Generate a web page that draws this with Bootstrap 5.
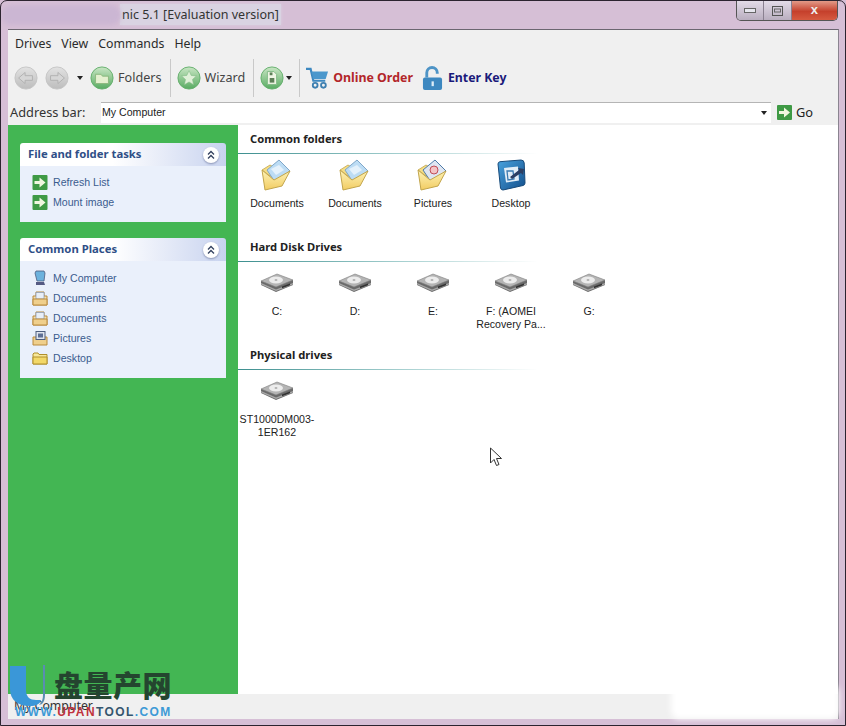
<!DOCTYPE html>
<html lang="en">
<head>
<meta charset="UTF-8">
<title>Partition Recovery</title>
<link href="https://cdn.jsdelivr.net/npm/bootstrap@5.3.0/dist/css/bootstrap.min.css" rel="stylesheet">
<style>
html, body { height: 100%; }
body { background: #d6bfd6; font-family: "Liberation Sans", sans-serif; font-size: 10.6px; color: #222; overflow: hidden; }
.app-win { width: 846px; height: 726px; position: relative; padding: 0 6px 7px 7px; border: 1px solid #2c2430; border-radius: 7px 7px 0 0; overflow: hidden; background: #d6bfd6; }
.title-row { height: 28px; padding-left: 112px; }
.title-text { font-family: "Noto Sans", sans-serif; font-size: 12.5px; color: #333; background: #d9d3e2; padding: 0 2px; margin-top: 3px; line-height: 21px; box-shadow: 0 0 3px #d9d3e2; }
.title-smudge { position: absolute; left: 0; top: 4px; width: 120px; height: 20px; background: #cbb6d3; border-radius: 10px; filter: blur(2px); }
.win-btns { width: 102px; height: 20px; border: 1px solid #555; border-top: 0; border-radius: 0 0 5px 5px; overflow: hidden; margin-right: 1px; flex: none; }
.win-btn { background: linear-gradient(#e3dbe8, #b9aebf); border-right: 1px solid #8a8090; width: 28px; }
.win-btn.wb-close { width: 46px; flex: auto; border: 0; background: linear-gradient(#e29a88, #c5402c 55%, #d65a40); color: #eee; font-size: 13px; font-weight: 700; line-height: 17px; text-align: center; }
.client { height: 690px; background: #f0f0f0; border-top: 1px solid #6b6670; border-right: 1px solid #8a8490; }
.menu-row { height: 28px; padding-left: 7px; gap: 10px; font-family: "Noto Sans", sans-serif; font-size: 12.3px; color: #2b2b2b; }
.tool-row { height: 44px; padding: 0 0 4px 6px; font-family: "Noto Sans", sans-serif; font-size: 12.6px; color: #444; }
.tool-sep { width: 1px; height: 38px; background: #c9c9c9; }
.caret-mini { width: 0; height: 0; border: 3px solid transparent; border-top: 4px solid #222; border-bottom: 0; }
.tool-order { color: #b3262a; font-weight: 700; font-size: 12.4px; }
.tool-key { color: #1a1a7a; font-weight: 700; font-size: 12.3px; }
.gl-2 { margin-left: 2px; } .gl-6 { margin-left: 6px; } .gl-7 { margin-left: 7px; } .gl-8 { margin-left: 8px; } .gl-9 { margin-left: 9px; }
.gr-4 { margin-right: 4px; } .gr-5 { margin-right: 5px; } .gr-6 { margin-right: 6px; } .gr-7 { margin-right: 7px; }
.addr-row { height: 23px; padding-bottom: 2px; font-family: "Noto Sans", sans-serif; font-size: 12.8px; }
.addr-label { width: 93px; padding-left: 2px; color: #333; flex: none; }
.addr-box { width: 670px; height: 21px; background: #fff; border-top: 1px solid #b5b5b5; font-family: "Liberation Sans", sans-serif; font-size: 10.6px; padding-left: 1px; flex: none; }
.main-row { height: 569px; }
.side-pane { width: 230px; background: #43b653; padding: 18px 12px 0 12px; flex: none; }
.task-box { margin-bottom: 16px; }
.task-head { height: 23px; background: linear-gradient(90deg, #fff 45%, #c8d3ef); border-radius: 3px 3px 0 0; padding: 0 7px 0 8px; color: #2f4f87; font-family: "Noto Sans", sans-serif; font-weight: 700; font-size: 11.3px; }
.chev-btn { width: 16px; height: 16px; background: #fff; border-radius: 50%; box-shadow: 0 1px 2px #8a94b5; }
.task-body { background: #eaf0fb; padding: 6px 0 10px 12px; color: #3b5c8f; line-height: 20px; }
.task-body.tb-places { padding-top: 7px; }
.task-line { height: 20px; gap: 5px; }
.file-pane { background: #fff; }
.file-sect { height: 108px; padding-top: 4px; }
.sect-title { font-family: "Noto Sans", sans-serif; font-weight: 700; font-size: 11.2px; color: #222; padding-left: 12px; height: 20px; line-height: 20px; }
.sect-rule { width: 300px; height: 1px; background: linear-gradient(90deg, #3d8f8f, #a6d0d0 55%, #fff); margin-top: 4px; }
.file-grid { display: flex; padding-top: 2px; }
.file-item { width: 78px; text-align: center; line-height: 13px; color: #222; }
.file-ico { height: 38px; display: flex; align-items: center; justify-content: center; margin-bottom: 3px; }
.status-row { height: 24px; padding: 1px 0 0 6px; font-family: "Noto Sans", sans-serif; font-size: 12.3px; color: #333; }
.wm-blob { position: absolute; right: 6px; bottom: 6px; width: 168px; height: 34px; background: #fff; border-radius: 8px; filter: blur(3px); }
.wm-logo { position: absolute; left: 8px; top: 664px; width: 170px; height: 58px; pointer-events: none; }
.wm-cn { position: absolute; left: 45px; top: 2px; font-family: "Noto Sans CJK SC", sans-serif; font-weight: 900; font-size: 29px; line-height: 34px; letter-spacing: .5px; color: #24452f; white-space: nowrap; }
.wm-url { position: absolute; left: 6px; top: 38px; font-weight: 700; font-size: 12px; letter-spacing: 1.4px; white-space: nowrap; color: #3d9ad6; }
.wm-red { color: #c0333d; }
.wm-dark { color: #35566e; }
.mouse-ptr { position: absolute; left: 488px; top: 446px; }
</style>
</head>
<body>
<svg width="0" height="0" class="position-absolute">
  <defs>
    <linearGradient id="gGreen" x1="0" y1="0" x2="0" y2="1"><stop offset="0" stop-color="#c9e6c4"/><stop offset="1" stop-color="#58ab62"/></linearGradient>
    <linearGradient id="gGrey" x1="0" y1="0" x2="0" y2="1"><stop offset="0" stop-color="#e2e2e2"/><stop offset="1" stop-color="#bdbdbd"/></linearGradient>
    <linearGradient id="gFold" x1="0" y1="0" x2="0" y2="1"><stop offset="0" stop-color="#fdf3b8"/><stop offset="1" stop-color="#f2cc62"/></linearGradient>
    <linearGradient id="gDesk" x1="0" y1="0" x2="1" y2="1"><stop offset="0" stop-color="#4aa3de"/><stop offset="1" stop-color="#124f8c"/></linearGradient>
    <symbol id="i-back" viewBox="0 0 26 26"><circle cx="13" cy="13" r="12" fill="url(#gGrey)" stroke="#c4c4c4"/><path d="M5 13l7-6v3.500h8v5h-8V19z" fill="#d6d6d6" stroke="#b0b0b0"/></symbol>
    <symbol id="i-fwd" viewBox="0 0 26 26"><circle cx="13" cy="13" r="12" fill="url(#gGrey)" stroke="#c4c4c4"/><path d="M21 13l-7-6v3.500H6v5h8V19z" fill="#d6d6d6" stroke="#b0b0b0"/></symbol>
    <symbol id="i-folders" viewBox="0 0 26 26"><circle cx="13" cy="13" r="12" fill="url(#gGreen)" stroke="#62ae6a"/><path d="M6 9h6l1.500 2H20v8H6z" fill="#e4f0cf" stroke="#8ab77c"/></symbol>
    <symbol id="i-wizard" viewBox="0 0 26 26"><circle cx="13" cy="13" r="12" fill="url(#gGreen)" stroke="#62ae6a"/><path d="M13 5l2.400 5.200 5.600.6-4.200 3.800 1.200 5.600-5-2.900-5 2.900 1.200-5.600L5 10.800l5.600-.6z" fill="#dff0d8" stroke="#7fb983" stroke-width=".6"/></symbol>
    <symbol id="i-disk" viewBox="0 0 26 26"><circle cx="13" cy="13" r="12" fill="url(#gGreen)" stroke="#62ae6a"/><path d="M8 6h7l3 3v11H8z" fill="#eef5e4" stroke="#7fb983"/><rect x="10.500" y="13" width="5" height="5" fill="#5c7f57"/><rect x="10.500" y="7" width="3" height="3" fill="#5c7f57"/></symbol>
    <symbol id="i-cart" viewBox="0 0 26 24"><path d="M1 2h5l3 13h13" fill="none" stroke="#3d88c0" stroke-width="2.400"/><path d="M7 5h18l-2.500 8H9z" fill="#4a97cc"/><circle cx="11" cy="20" r="2.600" fill="none" stroke="#3d7fb0" stroke-width="2"/><circle cx="20" cy="20" r="2.600" fill="none" stroke="#3d7fb0" stroke-width="2"/></symbol>
    <symbol id="i-lock" viewBox="0 0 22 26"><path d="M5 12V7a5.500 5.500 0 0 1 11 0v1" fill="none" stroke="#4e94c6" stroke-width="3"/><rect x="1" y="12" width="20" height="13" rx="2" fill="#3d88c0"/><rect x="10" y="16" width="2.400" height="5" fill="#dcecf7"/></symbol>
    <symbol id="i-go" viewBox="0 0 15 15"><rect width="15" height="15" rx="1" fill="#3f9a45"/><path d="M2 6h5V2.500L13 7.500l-6 5V9H2z" fill="#f0f7df"/></symbol>
    <symbol id="i-chev" viewBox="0 0 10 10"><path d="M2 4.500l3-3 3 3M2 8.500l3-3 3 3" fill="none" stroke="#33415f" stroke-width="1.300"/></symbol>
    <symbol id="i-pc" viewBox="0 0 16 16"><path d="M4 1h8l1 2-1 8H5L3 3z" fill="#6cb2dd" stroke="#4c5a7e" stroke-width=".8"/><path d="M4 12h8l1 3H4z" fill="#555a83"/></symbol>
    <symbol id="i-smdoc" viewBox="0 0 16 16"><path d="M1 6h3V2h8v4h3v9H1z" fill="#f3dfae" stroke="#b98a3d"/><path d="M4 2.500h8V9H4z" fill="#e8eef7" stroke="#8497b5" stroke-width=".7"/><path d="M1 9h14v6H1z" fill="#efcf8c" stroke="#b98a3d"/></symbol>
    <symbol id="i-smpic" viewBox="0 0 16 16"><path d="M1 7h14v8H1z" fill="#efcf8c" stroke="#b98a3d"/><rect x="4" y="1.500" width="9" height="8" fill="#dfe4ee" stroke="#4e5e7e"/><rect x="6" y="3.500" width="5" height="4" fill="#5e6f94"/></symbol>
    <symbol id="i-smfolder" viewBox="0 0 16 16"><path d="M1 4l1-1h4l1 1.500h8V14H1z" fill="#f7e89a" stroke="#b08f2c"/><path d="M1 7h14v7H1z" fill="#f2d868" stroke="#b08f2c"/></symbol>
    <symbol id="i-opendoc" viewBox="0 0 32 32"><path d="M1 11l8-5 7 4v12z" fill="#f5dd84" stroke="#c2a54c" stroke-width=".8"/><path d="M18 1l11 11-15 11L6 11z" fill="#bcdcf4" stroke="#7fa7c9"/><path d="M10 10l8-4 5 5-8 5z" fill="#e4f1fb"/><path d="M1 11l12 10 16-9-8 15-17 4z" fill="url(#gFold)" stroke="#c2a54c" stroke-linejoin="round"/></symbol>
    <symbol id="i-openpic" viewBox="0 0 32 32"><path d="M1 11l8-5 7 4v12z" fill="#f5dd84" stroke="#c2a54c" stroke-width=".8"/><path d="M18 1l11 11-15 11L6 11z" fill="#dfe6f2" stroke="#4e7ba8"/><circle cx="17" cy="11" r="4" fill="#f4c3c6" stroke="#c04d57"/><path d="M1 11l12 10 16-9-8 15-17 4z" fill="url(#gFold)" stroke="#c2a54c" stroke-linejoin="round"/></symbol>
    <symbol id="i-desk" viewBox="0 0 32 32"><path d="M3 5q0-2 2-2.300L26 1q3 0 3.200 3L30 24q0 2-2 2.500L8 31q-2 0-2.500-2z" fill="url(#gDesk)" stroke="#174a7a"/><path d="M9 9l14-1.500 1 14-13 2z" fill="#e3eef7"/><path d="M12 12h6l1 8-6 1z" fill="none" stroke="#3a7ab0" stroke-width="1.300"/><path d="M15 18l9-7-1-2 6 1-1 6-2-2-9 6z" fill="#2c3f63"/></symbol>
    <symbol id="i-hdd" viewBox="0 0 34 20"><path d="M1 8v4l15 7 17-7V7z" fill="#6a6a6a"/><path d="M1 8L17 1l16 6-17 7z" fill="#b4b4b4" stroke="#7e7e7e" stroke-width=".6"/><ellipse cx="16" cy="7" rx="7" ry="3.500" fill="#ececec"/><ellipse cx="16" cy="7" rx="1.500" ry=".8" fill="#9a9a9a"/><path d="M1 10l15 6.500L33 10v1.500L16 18 1 11.500z" fill="#a8a8a8"/><path d="M22 13.500l8-3v1.800l-8 3z" fill="#333"/></symbol>
  </defs>
</svg>
<div class="app-win">
  <div class="title-smudge"></div>
  <div class="title-row d-flex align-items-start justify-content-between">
    <span class="title-text">nic 5.1 [Evaluation version]</span>
    <div class="win-btns d-flex">
      <div class="win-btn d-flex align-items-center justify-content-center"><svg width="12" height="5"><rect x=".5" y=".5" width="11" height="4" fill="#e6e6ee" stroke="#666"/></svg></div>
      <div class="win-btn d-flex align-items-center justify-content-center"><svg width="11" height="10"><rect x=".5" y=".5" width="10" height="9" fill="none" stroke="#555"/><rect x="2.500" y="3" width="6" height="3" fill="none" stroke="#666"/></svg></div>
      <div class="win-btn wb-close">x</div>
    </div>
  </div>
  <div class="client d-flex flex-column">
    <div class="menu-row d-flex align-items-center">
      <span>Drives</span><span>View</span><span>Commands</span><span>Help</span>
    </div>
    <div class="tool-row d-flex align-items-center">
      <svg width="24" height="24"><use href="#i-back"/></svg>
      <svg width="24" height="24" class="gl-7"><use href="#i-fwd"/></svg>
      <span class="caret-mini gl-8 gr-7"></span>
      <svg width="24" height="24" class="gr-4"><use href="#i-folders"/></svg>
      <span>Folders</span>
      <span class="tool-sep gl-8 gr-6"></span>
      <svg width="24" height="24" class="gr-4"><use href="#i-wizard"/></svg>
      <span>Wizard</span>
      <span class="tool-sep gl-8 gr-6"></span>
      <svg width="24" height="24"><use href="#i-disk"/></svg>
      <span class="caret-mini gl-2"></span>
      <span class="tool-sep gl-7 gr-5"></span>
      <svg width="24" height="22" class="gr-4"><use href="#i-cart"/></svg>
      <span class="tool-order">Online Order</span>
      <svg width="21" height="25" class="gl-9 gr-5"><use href="#i-lock"/></svg>
      <span class="tool-key">Enter Key</span>
    </div>
    <div class="addr-row d-flex align-items-center">
      <span class="addr-label">Address bar:</span>
      <div class="addr-box d-flex align-items-center justify-content-between">
        <span>My Computer</span><span class="caret-mini me-1"></span>
      </div>
      <svg width="15" height="15" class="gl-6 flex-shrink-0"><use href="#i-go"/></svg>
      <span class="ms-1">Go</span>
    </div>
    <div class="main-row d-flex">
      <div class="side-pane">
        <div class="task-box">
          <div class="task-head d-flex align-items-center justify-content-between">
            <span>File and folder tasks</span>
            <span class="chev-btn d-flex align-items-center justify-content-center"><svg width="10" height="10"><use href="#i-chev"/></svg></span>
          </div>
          <div class="task-body">
            <div class="task-line d-flex align-items-center"><svg width="16" height="15"><use href="#i-go"/></svg>Refresh List</div>
            <div class="task-line d-flex align-items-center"><svg width="16" height="15"><use href="#i-go"/></svg>Mount image</div>
          </div>
        </div>
        <div class="task-box">
          <div class="task-head d-flex align-items-center justify-content-between">
            <span>Common Places</span>
            <span class="chev-btn d-flex align-items-center justify-content-center"><svg width="10" height="10"><use href="#i-chev"/></svg></span>
          </div>
          <div class="task-body tb-places">
            <div class="task-line d-flex align-items-center"><svg width="16" height="16"><use href="#i-pc"/></svg>My Computer</div>
            <div class="task-line d-flex align-items-center"><svg width="16" height="16"><use href="#i-smdoc"/></svg>Documents</div>
            <div class="task-line d-flex align-items-center"><svg width="16" height="16"><use href="#i-smdoc"/></svg>Documents</div>
            <div class="task-line d-flex align-items-center"><svg width="16" height="16"><use href="#i-smpic"/></svg>Pictures</div>
            <div class="task-line d-flex align-items-center"><svg width="16" height="16"><use href="#i-smfolder"/></svg>Desktop</div>
          </div>
        </div>
      </div>
      <div class="file-pane flex-grow-1">
        <div class="file-sect">
          <div class="sect-title">Common folders</div>
          <div class="sect-rule"></div>
          <div class="file-grid">
            <div class="file-item"><div class="file-ico"><svg width="32" height="32"><use href="#i-opendoc"/></svg></div>Documents</div>
            <div class="file-item"><div class="file-ico"><svg width="32" height="32"><use href="#i-opendoc"/></svg></div>Documents</div>
            <div class="file-item"><div class="file-ico"><svg width="32" height="32"><use href="#i-openpic"/></svg></div>Pictures</div>
            <div class="file-item"><div class="file-ico"><svg width="32" height="32"><use href="#i-desk"/></svg></div>Desktop</div>
          </div>
        </div>
        <div class="file-sect">
          <div class="sect-title">Hard Disk Drives</div>
          <div class="sect-rule"></div>
          <div class="file-grid">
            <div class="file-item"><div class="file-ico"><svg width="34" height="20"><use href="#i-hdd"/></svg></div>C:</div>
            <div class="file-item"><div class="file-ico"><svg width="34" height="20"><use href="#i-hdd"/></svg></div>D:</div>
            <div class="file-item"><div class="file-ico"><svg width="34" height="20"><use href="#i-hdd"/></svg></div>E:</div>
            <div class="file-item"><div class="file-ico"><svg width="34" height="20"><use href="#i-hdd"/></svg></div>F: (AOMEI Recovery Pa...</div>
            <div class="file-item"><div class="file-ico"><svg width="34" height="20"><use href="#i-hdd"/></svg></div>G:</div>
          </div>
        </div>
        <div class="file-sect">
          <div class="sect-title">Physical drives</div>
          <div class="sect-rule"></div>
          <div class="file-grid">
            <div class="file-item"><div class="file-ico"><svg width="34" height="20"><use href="#i-hdd"/></svg></div>ST1000DM003-1ER162</div>
          </div>
        </div>
      </div>
    </div>
    <div class="status-row d-flex align-items-center">My Computer</div>
  </div>
  <div class="wm-blob"></div>
  <svg class="mouse-ptr" width="14" height="21"><path d="M1.500 1v15l3.500-3.500 2.500 6 2.500-1-2.500-6h5z" fill="#fff" stroke="#333"/></svg>
  <div class="wm-logo">
    <svg width="40" height="44" class="position-absolute top-0 start-0"><path d="M1 1h16v24c0 7 4 10 10 10h5c-1 4-5 6-11 6C9 41 1 35 1 24z" fill="#3a97d8"/><path d="M34 0h2v30c0 4-1 7-3 9l-3 1c3-3 4-6 4-10z" fill="#5a8db0"/></svg>
    <div class="wm-cn">盘量产网</div>
    <div class="wm-url">WWW.<span class="wm-red">UPAN</span><span class="wm-dark">TOOL</span>.COM</div>
  </div>
</div>
<script src="https://cdn.jsdelivr.net/npm/bootstrap@5.3.0/dist/js/bootstrap.bundle.min.js"></script>
</body>
</html>
